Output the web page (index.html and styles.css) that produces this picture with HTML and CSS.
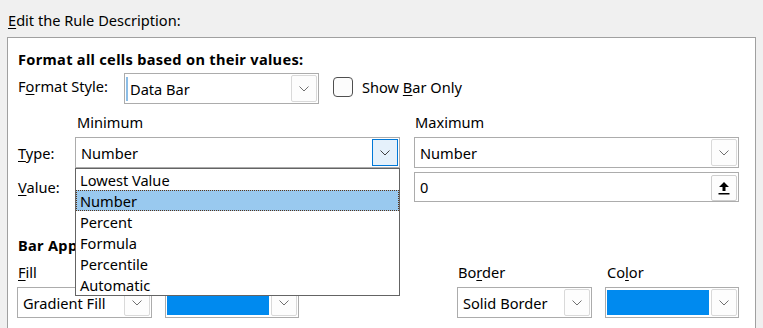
FILE: index.html
```html
<!DOCTYPE html>
<html>
<head>
<meta charset="utf-8">
<link rel="stylesheet" href="styles.css">
</head>
<body>
<div class="caption"><u>E</u>dit the Rule Description:</div>
<div class="panel">
  <div class="title">Format all cells based on their values:</div>

  <div class="row style-row">
    <span class="lbl style-lbl">F<u>o</u>rmat Style:</span>
    <div class="combo style-combo">
      <span class="caret"></span>
      <span class="val val-tight">Data Bar</span>
      <span class="btn"><svg width="10" height="6" viewBox="0 0 10 6"><polyline points="0.5,0.5 5,5 9.5,0.5" fill="none" stroke="#707070" stroke-width="1"/></svg></span>
    </div>
    <span class="check"></span>
    <span class="check-lbl">Show <u>B</u>ar Only</span>
  </div>

  <div class="row heads">
    <span class="head head-min">Minimum</span>
    <span class="head head-max">Maximum</span>
  </div>

  <div class="row type-row">
    <span class="lbl"><u>T</u>ype:</span>
    <div class="combo wide anchor">
      <span class="val">Number</span>
      <span class="btn btn-focus"><svg width="10" height="6" viewBox="0 0 10 6"><polyline points="0.5,0.5 5,5 9.5,0.5" fill="none" stroke="#404040" stroke-width="1"/></svg></span>
      <ul class="list">
        <li>Lowest Value</li>
        <li class="sel">Number</li>
        <li>Percent</li>
        <li>Formula</li>
        <li>Percentile</li>
        <li>Automatic</li>
      </ul>
    </div>
    <div class="combo wide">
      <span class="val">Number</span>
      <span class="btn"><svg width="10" height="6" viewBox="0 0 10 6"><polyline points="0.5,0.5 5,5 9.5,0.5" fill="none" stroke="#707070" stroke-width="1"/></svg></span>
    </div>
  </div>

  <div class="row value-row">
    <span class="lbl"><u>V</u>alue:</span>
    <div class="input wide"><span class="val"></span></div>
    <div class="input wide">
      <span class="val">0</span>
      <span class="btn btn-up"><svg width="12" height="13" viewBox="0 0 12 13"><polygon points="6,0 11,5 7.5,5 7.5,9 4.5,9 4.5,5 1,5" fill="#000"/><rect x="0.5" y="11" width="11" height="1.5" fill="#000"/></svg></span>
    </div>
  </div>

  <div class="section">Bar Appearance:</div>

  <div class="bottom">
    <div class="group g-fill">
      <span class="glbl"><u>F</u>ill</span>
      <div class="combo small">
        <span class="val">Gradient Fill</span>
        <span class="btn"><svg width="10" height="6" viewBox="0 0 10 6"><polyline points="0.5,0.5 5,5 9.5,0.5" fill="none" stroke="#707070" stroke-width="1"/></svg></span>
      </div>
    </div>
    <div class="group g-fillcolor">
      <span class="glbl">&nbsp;</span>
      <div class="combo small color">
        <span class="swatch"></span>
        <span class="btn"><svg width="10" height="6" viewBox="0 0 10 6"><polyline points="0.5,0.5 5,5 9.5,0.5" fill="none" stroke="#707070" stroke-width="1"/></svg></span>
      </div>
    </div>
    <div class="group g-border">
      <span class="glbl">Bo<u>r</u>der</span>
      <div class="combo small">
        <span class="val">Solid Border</span>
        <span class="btn"><svg width="10" height="6" viewBox="0 0 10 6"><polyline points="0.5,0.5 5,5 9.5,0.5" fill="none" stroke="#707070" stroke-width="1"/></svg></span>
      </div>
    </div>
    <div class="group g-color">
      <span class="glbl">Co<u>l</u>or</span>
      <div class="combo small color">
        <span class="swatch"></span>
        <span class="btn"><svg width="10" height="6" viewBox="0 0 10 6"><polyline points="0.5,0.5 5,5 9.5,0.5" fill="none" stroke="#707070" stroke-width="1"/></svg></span>
      </div>
    </div>
  </div>
</div>
</body>
</html>
```
FILE: styles.css
```css
html, body {
  margin: 0;
  padding: 0;
}
body {
  background: #f0f0f0;
  font-family: "Noto Sans", "Open Sans", sans-serif;
  font-size: 14.6px;
  line-height: 20px;
  color: #000;
  overflow: hidden;
  padding-top: 10px;
}
u {
  text-decoration: underline;
  text-underline-offset: 2px;
  text-decoration-thickness: 1px;
}
.caption {
  padding-left: 8px;
  height: 20px;
}
.panel {
  margin-top: 7px;
  margin-left: 7px;
  width: 749px;
  height: 300px;
  box-sizing: border-box;
  border: 1px solid #a0a0a0;
  background: #fff;
  padding: 11px 0 0 10px;
}
.title {
  font-weight: bold;
  letter-spacing: 0.3px;
  height: 20px;
}
.row {
  display: flex;
  align-items: center;
}
.style-row {
  margin-top: 4px;
  height: 31px;
}
.lbl {
  width: 57px;
  flex: none;
}
.style-lbl {
  width: 106px;
  align-self: flex-start;
  margin-top: 3px;
}
.combo, .input {
  display: flex;
  align-items: stretch;
  box-sizing: border-box;
  height: 31px;
  border: 1px solid #acacac;
  background: #fff;
  flex: none;
}
.input {
  height: 30px;
}
.val {
  flex: 1;
  display: flex;
  align-items: center;
  padding-left: 5px;
  white-space: nowrap;
  overflow: hidden;
}
.val-tight {
  padding-left: 2px;
}
.caret {
  width: 2px;
  margin: 3px 0 2px 1px;
  background: #8cbde6;
}
.btn {
  flex: none;
  width: 26px;
  margin: 1px;
  box-sizing: border-box;
  border: 1px solid #d9d9d9;
  border-radius: 2px;
  background: #fdfdfd;
  display: flex;
  align-items: center;
  justify-content: center;
}
.btn-focus {
  background: #e5f1fb;
  border: 1px solid #0078d7;
  border-radius: 0;
}
.btn-up {
  margin: 2px 1px 0 1px;
  width: 26px;
  border-color: #cfcfcf;
}
.btn-up svg {
  margin-top: 1px;
}
.style-combo {
  width: 195px;
}
.check {
  width: 20px;
  height: 20px;
  box-sizing: border-box;
  border: 1px solid #4f4f4f;
  border-radius: 4px;
  background: #fcfcfc;
  margin-left: 14px;
  margin-bottom: 4px;
  flex: none;
}
.check-lbl {
  margin-left: 9px;
  margin-bottom: 3px;
}
.heads {
  margin-top: 8px;
  height: 20px;
}
.head-min {
  margin-left: 59px;
  width: 338px;
}
.head-max {
  margin-left: 0;
}
.type-row {
  margin-top: 5px;
  height: 31px;
}
.wide {
  width: 325px;
}
.type-row .wide + .wide,
.value-row .wide + .wide {
  margin-left: 14px;
}
.anchor {
  position: relative;
}
.list {
  position: absolute;
  z-index: 10;
  left: -1px;
  top: 30px;
  width: 325px;
  margin: 0;
  padding: 0;
  list-style: none;
  box-sizing: border-box;
  border: 1px solid #646464;
  background: #fff;
}
.list li {
  height: 21px;
  line-height: 21px;
  padding-left: 3px;
  box-sizing: border-box;
  border: 1px solid transparent;
}
.list li.sel {
  background: #99c9ef;
  border: 1px dotted #5a3418;
}
.value-row {
  margin-top: 4px;
  height: 30px;
}
.section {
  margin-top: 33px;
  font-weight: bold;
  letter-spacing: 0.3px;
  height: 20px;
  width: 57px;
  overflow: hidden;
  white-space: nowrap;
}
.bottom {
  display: flex;
  margin-top: 7px;
  margin-left: -1px;
}
.group {
  display: flex;
  flex-direction: column;
}
.glbl {
  height: 20px;
  padding-left: 1px;
  margin-bottom: 5px;
}
.small {
  width: 135px;
}
.color {
  width: 134px;
}
.g-fillcolor {
  margin-left: 13px;
}
.g-border {
  margin-left: 158px;
}
.g-color {
  margin-left: 13px;
}
.g-color .glbl {
  padding-left: 2px;
}
.swatch {
  flex: 1;
  margin: 2px 1px 2px 1px;
  background: #008aef;
}
```
